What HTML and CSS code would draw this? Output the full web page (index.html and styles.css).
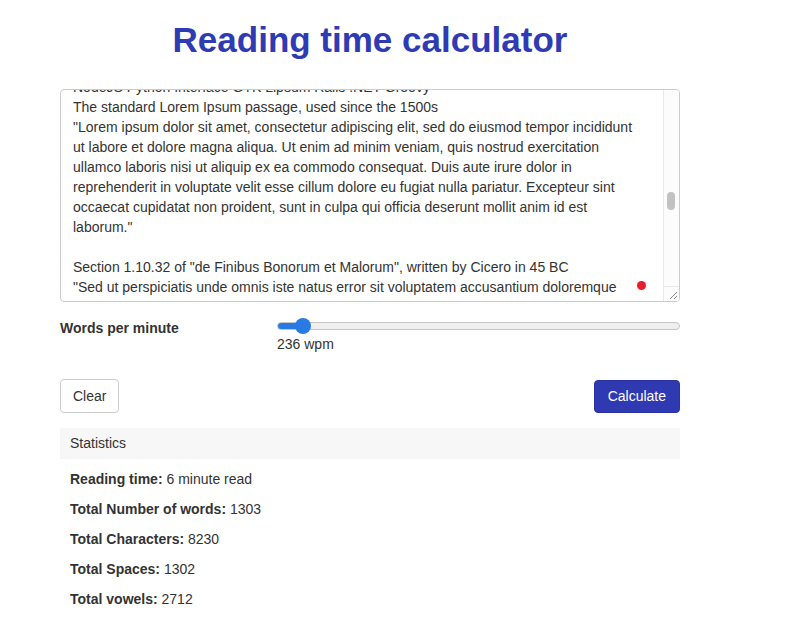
FILE: index.html
```html
<!DOCTYPE html>
<html lang="en">
<head>
<meta charset="utf-8">
<title>Reading time calculator</title>
<link rel="stylesheet" href="styles.css">
</head>
<body>
<main class="container">
  <h1 class="title">Reading time calculator</h1>

  <div class="editor">
    <div class="editor-text">
      <div class="ln">NodeJS Python Interface GTK Lipsum Rails .NET Groovy</div>
      <div class="ln">The standard Lorem Ipsum passage, used since the 1500s</div>
      <div class="ln">"Lorem ipsum dolor sit amet, consectetur adipiscing elit, sed do eiusmod tempor incididunt</div>
      <div class="ln">ut labore et dolore magna aliqua. Ut enim ad minim veniam, quis nostrud exercitation</div>
      <div class="ln">ullamco laboris nisi ut aliquip ex ea commodo consequat. Duis aute irure dolor in</div>
      <div class="ln">reprehenderit in voluptate velit esse cillum dolore eu fugiat nulla pariatur. Excepteur sint</div>
      <div class="ln">occaecat cupidatat non proident, sunt in culpa qui officia deserunt mollit anim id est</div>
      <div class="ln">laborum."</div>
      <div class="ln">&nbsp;</div>
      <div class="ln">Section 1.10.32 of "de Finibus Bonorum et Malorum", written by Cicero in 45 BC</div>
      <div class="ln">"Sed ut perspiciatis unde omnis iste natus error sit voluptatem accusantium doloremque</div>
      <div class="ln">laudantium, totam rem aperiam, eaque ipsa quae ab illo inventore veritatis et quasi</div>
    </div>
    <div class="scroll-track"><div class="scroll-thumb"></div></div>
    <div class="resize-grip">
      <svg width="10" height="10" viewBox="0 0 10 10"><path d="M9 2 L2 9 M9 6 L6 9" stroke="#8a8a8a" stroke-width="1" fill="none"/></svg>
    </div>
    <span class="spell-dot"></span>
  </div>

  <div class="wpm-row">
    <label class="wpm-label" for="wpm">Words per minute</label>
    <div class="wpm-control">
      <input id="wpm" class="range" type="range" min="200" max="1000" value="236">
      <div class="wpm-value">236 wpm</div>
    </div>
  </div>

  <div class="actions">
    <button class="btn btn-default" type="button">Clear</button>
    <button class="btn btn-primary" type="button">Calculate</button>
  </div>

  <section class="stats">
    <div class="stats-heading">Statistics</div>
    <p class="stat"><b>Reading time:</b> 6 minute read</p>
    <p class="stat"><b>Total Number of words:</b> 1303</p>
    <p class="stat"><b>Total Characters:</b> 8230</p>
    <p class="stat"><b>Total Spaces:</b> 1302</p>
    <p class="stat"><b>Total vowels:</b> 2712</p>
  </section>
</main>
</body>
</html>
```

FILE: styles.css
```css
* { box-sizing: border-box; }

html, body {
  margin: 0;
  padding: 0;
  background: #fff;
}

body {
  font-family: "Liberation Sans", Arial, Helvetica, sans-serif;
  font-size: 14px;
  line-height: 20px;
  color: #333;
}

.container {
  width: 620px;
  margin-left: 60px;
}

.title {
  margin: 0;
  padding-top: 18px;
  font-size: 35px;
  line-height: 44px;
  font-weight: bold;
  text-align: center;
  color: #2f3bb3;
}

.editor {
  position: relative;
  margin-top: 27px;
  height: 213px;
  border: 1px solid #ccc;
  border-radius: 4px;
  overflow: hidden;
  padding: 0 12px;
  background: #fff;
}

.editor-text {
  margin-top: -13px;
  white-space: nowrap;
  color: #333;
}

.ln { height: 20px; }

.scroll-track {
  position: absolute;
  top: 0;
  right: 0;
  width: 16px;
  height: 100%;
  border-left: 1px solid #e8e8e8;
  background: #fcfcfc;
}

.scroll-thumb {
  position: absolute;
  top: 102px;
  left: 3px;
  width: 8px;
  height: 18px;
  border-radius: 4px;
  background: #c2c2c2;
}

.resize-grip {
  position: absolute;
  right: 0;
  bottom: 0;
  width: 16px;
  height: 15px;
  display: flex;
  align-items: flex-end;
  justify-content: flex-end;
  padding: 0 1px 1px 0;
  background: #fcfcfc;
  border-top: 1px solid #e8e8e8;
  border-left: 1px solid #e8e8e8;
}

.resize-grip svg { display: block; }

.spell-dot {
  position: absolute;
  left: 576px;
  top: 191px;
  width: 9px;
  height: 9px;
  border-radius: 50%;
  background: #ec1c2e;
}

.wpm-row {
  display: grid;
  grid-template-columns: 217px 1fr;
  margin-top: 16px;
}

.wpm-label {
  font-weight: bold;
  line-height: 20px;
}

.wpm-control {
  display: flex;
  flex-direction: column;
}

.range {
  -webkit-appearance: none;
  appearance: none;
  display: block;
  margin: 0;
  width: 403px;
  height: 16px;
  background: transparent;
}

.range::-webkit-slider-runnable-track {
  height: 8px;
  border-radius: 4px;
  border: 1px solid #c6c6c6;
  background: linear-gradient(to right, #2a7ae6 0, #2a7ae6 26px, #efefef 26px, #efefef 100%);
}

.range::-webkit-slider-thumb {
  -webkit-appearance: none;
  appearance: none;
  width: 16px;
  height: 16px;
  margin-top: -5px;
  border-radius: 50%;
  background: #2a7ae6;
  border: none;
}

.wpm-value {
  line-height: 20px;
}

.actions {
  display: flex;
  justify-content: space-between;
  align-items: center;
  margin-top: 25px;
}

.btn {
  font-family: inherit;
  font-size: 14px;
  line-height: 20px;
  padding: 6px 12px;
  border-radius: 4px;
  border: 1px solid #ccc;
  cursor: pointer;
  height: 34px;
}

.btn-default {
  background: #fff;
  color: #333;
}

.btn-primary {
  background: #2f39b1;
  border-color: #2a33a0;
  color: #fff;
  height: 33px;
  padding: 5px 13px;
}

.stats {
  margin-top: 15px;
}

.stats-heading {
  background: #f7f7f7;
  padding: 5px 10px 6px;
  line-height: 20px;
  color: #333;
}

.stat {
  margin: 10px 0;
  padding-left: 10px;
  line-height: 20px;
}

.stat b { font-weight: bold; }
```
